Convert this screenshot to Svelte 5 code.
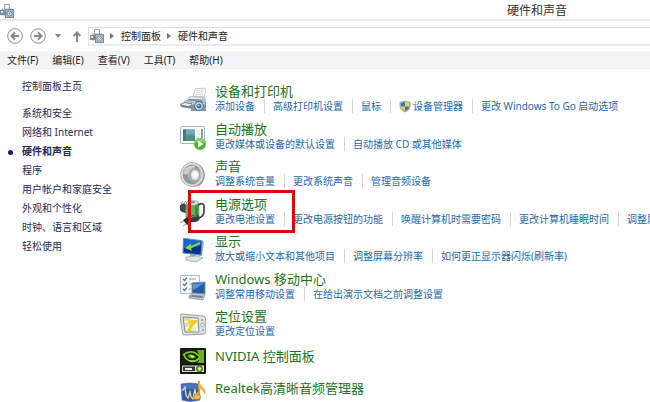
<script lang="ts">
  type Task = { text: string; shield?: boolean };
  type Category = { icon: string; title: string; tasks: Task[]; marked?: boolean };

  const menus = ['文件(F)', '编辑(E)', '查看(V)', '工具(T)', '帮助(H)'];

  const places = [
    '系统和安全',
    '网络和 Internet',
    '硬件和声音',
    '程序',
    '用户帐户和家庭安全',
    '外观和个性化',
    '时钟、语言和区域',
    '轻松使用'
  ];
  let current = $state('硬件和声音');

  const categories: Category[] = [
    {
      icon: 'printer',
      title: '设备和打印机',
      tasks: [
        { text: '添加设备' },
        { text: '高级打印机设置' },
        { text: '鼠标' },
        { text: '设备管理器', shield: true },
        { text: '更改 Windows To Go 启动选项' }
      ]
    },
    {
      icon: 'autoplay',
      title: '自动播放',
      tasks: [{ text: '更改媒体或设备的默认设置' }, { text: '自动播放 CD 或其他媒体' }]
    },
    {
      icon: 'speaker',
      title: '声音',
      tasks: [{ text: '调整系统音量' }, { text: '更改系统声音' }, { text: '管理音频设备' }]
    },
    {
      icon: 'power',
      title: '电源选项',
      marked: true,
      tasks: [
        { text: '更改电池设置' },
        { text: '更改电源按钮的功能' },
        { text: '唤醒计算机时需要密码' },
        { text: '更改计算机睡眠时间' },
        { text: '调整屏幕亮度' }
      ]
    },
    {
      icon: 'display',
      title: '显示',
      tasks: [
        { text: '放大或缩小文本和其他项目' },
        { text: '调整屏幕分辨率' },
        { text: '如何更正显示器闪烁(刷新率)' }
      ]
    },
    {
      icon: 'mobility',
      title: 'Windows 移动中心',
      tasks: [{ text: '调整常用移动设置' }, { text: '在给出演示文档之前调整设置' }]
    },
    { icon: 'location', title: '定位设置', tasks: [{ text: '更改定位设置' }] }
  ];

  const vendors: Category[] = [
    { icon: 'nvidia', title: 'NVIDIA 控制面板', tasks: [] },
    { icon: 'realtek', title: 'Realtek高清晰音频管理器', tasks: [] }
  ];
</script>

{#snippet deviceIcon()}
  <svg class="device" viewBox="0 0 14 14" aria-hidden="true">
    <path d="M4.500 5V.5h5V5" fill="#fff" stroke="#9aa3aa" />
    <path d="M2 5h10l1.500 2v4H2z" fill="#cdd3d7" stroke="#98a2a9" stroke-width=".8" />
    <path d="M0 6h5v5H0z" fill="#7d8b96" />
    <path d="M1 7h2v2H1z" fill="#dfe6ea" />
    <rect x="5.500" y="5.500" width="8" height="8" fill="#a9bac5" stroke="#7b8d99" />
    <circle cx="9.500" cy="9.500" r="2.500" fill="#e2f1f9" stroke="#5c86a0" />
    <circle cx="9.500" cy="9.500" r="1" fill="#4b8cb3" />
  </svg>
{/snippet}

{#snippet shieldIcon()}
  <svg class="shield" viewBox="0 0 12 13" aria-hidden="true">
    <path d="M6 .5 11.500 2v4c0 3-2 5-5.500 6.500C2.500 11 .5 9 .5 6V2z" fill="#a8b0b5" />
    <path d="M6 2v4.500H2V3z" fill="#2979c4" />
    <path d="M6 2l4 1v3.500H6z" fill="#ffd53c" />
    <path d="M2 6.500h4V11C3.500 10 2 8.500 2 6.500z" fill="#f7c52b" />
    <path d="M10 6.500H6V11c2.500-1 4-2.500 4-4.500z" fill="#2b7dc9" />
  </svg>
{/snippet}

{#snippet categoryIcon(name: string)}
  <svg class="icon" viewBox="0 0 26 26" aria-hidden="true">
    {#if name === 'printer'}
      <path d="M13 10 15 2l9-1 2 1-2 9z" fill="#f8fafb" stroke="#b3babe" stroke-width=".7" />
      <path d="M16 4l8-1M15.500 6l8-1M15 8l8-1" stroke="#c5ced4" stroke-width=".6" />
      <path d="M4 14 10 9h13l3 3v8l-5 3-7-1-12-3z" fill="#bcc4c9" />
      <path d="M5 13l6-3 12 1-7 4z" fill="#e6eaed" />
      <path d="M9 12l12 .5-5 1.500-9-.5z" fill="#707c85" />
      <path d="M0 17l5-2 9 2-1 5-12-2z" fill="#77848e" />
      <path d="M1 17.500 5 16l7 1.500-4 1.500z" fill="#edf1f3" />
      <path d="M11 15h4l1-2h6l1 2h3v9H11z" fill="#8195a3" />
      <path d="M12 15.500h13v2H12z" fill="#c3ced5" />
      <circle cx="19" cy="19" r="4.300" fill="#dfebf2" stroke="#4b6579" />
      <circle cx="19" cy="19" r="2.500" fill="#2976ad" />
      <circle cx="18.500" cy="18.500" r="1" fill="#a6dcf7" />
    {:else if name === 'autoplay'}
      <rect x=".5" y="1.500" width="24" height="17" rx="1" fill="#fbfcfc" stroke="#aab3b8" />
      <path d="M3 4.500h12v11.500H3z" fill="#5d9aa6" />
      <path d="M3 4.500h12v5q-6-3-12 2z" fill="#77adc4" />
      <path d="M3 4.500h3V16H3z" fill="#3e79a2" />
      <path d="M6 12q5-3 9 0v4H6z" fill="#4f9468" />
      <path d="M16.500 6h3M16.500 9h3M16.500 12h3" stroke="#ced5d9" />
      <path d="M22 4v9" stroke="#56626a" stroke-width="1.300" />
      <circle cx="20" cy="19" r="6" fill="#4bb431" stroke="#a5d697" stroke-width=".7" />
      <path d="M15 18a5 5 0 0 1 10 0q-5-2-10 0z" fill="#82d45f" />
      <path d="M18 15.500 23.500 19 18 22.500z" fill="#fff" />
    {:else if name === 'speaker'}
      <ellipse cx="15" cy="13" rx="10" ry="11.500" fill="#9a9fa2" />
      <ellipse cx="12" cy="12.500" rx="11.500" ry="12" fill="#dcdfe0" stroke="#a1a6a9" stroke-width=".8" />
      <ellipse cx="12" cy="12.500" rx="9.300" ry="10" fill="#92989c" />
      <path d="M3 12C4 5 9 3 15 3.500L13 13z" fill="#c9cdd0" />
      <path d="M12 13 21 9q1 6-3 10z" fill="#c0c5c8" />
      <ellipse cx="14" cy="13" rx="6" ry="7" fill="#aab0b3" />
      <ellipse cx="15" cy="13" rx="4.500" ry="5.500" fill="#e4e7e8" stroke="#8b9296" stroke-width=".7" />
      <ellipse cx="15" cy="12.500" rx="2.500" ry="3" fill="#f8f9fa" />
    {:else if name === 'power'}
      <path d="M6 12Q-1 11 1 6" fill="none" stroke="#3a4144" stroke-width="2" />
      <path d="M0 5l4-2 4 4-3 4-4-1z" fill="#40484c" />
      <path d="M1 4l2-3M4 3l2-2" stroke="#7f898e" />
      <rect x="6" y="1.500" width="13" height="20" rx="3" fill="#5bb553" stroke="#758f77" stroke-width=".7" />
      <path d="M8 5h3v15H8z" fill="#c1edb3" />
      <path d="M15 5h3v15h-3z" fill="#369238" />
      <ellipse cx="12.500" cy="3" rx="6" ry="2.300" fill="#dce2df" stroke="#869188" stroke-width=".6" />
      <ellipse cx="12.500" cy="2" rx="2.700" ry="1.200" fill="#8a9791" />
      <path d="M18 5q6-3 6 1v5q0 6-6 7" fill="none" stroke="#3c4346" stroke-width="1.700" />
      <path d="M7 19q5-5 11-4l2 4q-5 5-9 2z" fill="#353d40" />
      <path d="M3 20l6-4 4 5-6 4z" fill="#262b2e" />
      <path d="M10 18q4-3 7-2" fill="none" stroke="#99a2a5" />
      <path d="M4 21l-4 2M6 24l-3 2" stroke="#8c9498" />
    {:else if name === 'display'}
      <path d="M3 1l19 2 2 2-2 14-19-3z" fill="#9aafbb" />
      <path d="M3.500 1.500 22 4l-1 14-18-2z" fill="#1548a3" stroke="#6a8799" />
      <path d="M4 2l17 2.500-1 7-16 3z" fill="#1866cc" />
      <path d="M4 11l17-2-1 8-16-2z" fill="#0a318e" />
      <path d="M20 5 11 9V6.500L5 11l7 3-1-2.500L20 7z" fill="#83d94e" />
      <path d="M10 17l6 1v3h-7z" fill="#9cabb3" />
      <path d="M6 20l11-1 6 2-7 4-10-2z" fill="#dce4e8" stroke="#90a3ae" stroke-width=".7" />
    {:else if name === 'mobility'}
      <path d="M.5.500h19v18H.5z" fill="#f9fbfc" stroke="#b3bdc3" />
      <path d="M3 4l1.500 1.500L7 2.500M3 9l1.500 1.500L7 7.500M3 14l1.500 1.500L7 12.500" fill="none" stroke="#4076a6" stroke-width="1.200" />
      <path d="M9 4h7M9 9h3M9 14h2" stroke="#8d9ca5" />
      <path d="M12 8l13-1v12l-13-1z" fill="#3b5570" stroke="#8098ab" />
      <path d="M13 9l11-.8V18l-11-1z" fill="#1c5fae" />
      <path d="M13 9l11-.8-11 7z" fill="#4b9add" />
      <path d="M9 21l4-3 12 1-2 6-14-2z" fill="#bcc8d1" stroke="#7b8996" stroke-width=".7" />
      <path d="M12 20l11 1-1 2-12-1.500z" fill="#707f8d" />
    {:else if name === 'location'}
      <path d="M2 2l21 2q2 0 2.500 2l.5 13q0 3-2 3l-19 1q-2 0-2.500-2L0 4q0-2 2-2z" fill="#dfe2e2" stroke="#9aa0a0" />
      <path d="M3 5l15 1 1 14H5z" fill="#e5edc6" stroke="#858c8c" />
      <path d="M4 6l7 .5L6 17z" fill="#cee2a9" />
      <path d="M5 10l13-2M13 7l5 12M6 16l12-3" stroke="#fff" stroke-width="1.300" />
      <path d="M8 10l7-.5-5 6-1 4" fill="none" stroke="#eeca24" stroke-width="3" />
      <circle cx="22" cy="8" r=".8" fill="#687174" />
      <circle cx="22.500" cy="13" r="1.800" fill="#f5f6f6" stroke="#8a9293" stroke-width=".7" />
      <circle cx="23" cy="18" r=".8" fill="#687174" />
    {:else if name === 'nvidia'}
      <rect width="26" height="26" rx="1" fill="#151715" />
      <path d="M2 2h22v13H2z" fill="#12260d" />
      <path d="M17 2h7v13h-7q5-3 0-13z" fill="#6fb01f" />
      <path d="M3 7q9-7 17 2-4 6-10 4" fill="none" stroke="#7cc524" stroke-width="1.600" />
      <path d="M4 7q2 6 8 6 5 0 7-3" fill="none" stroke="#a5d839" stroke-width="1.300" />
      <path d="M7 8q4-4 9 1-4 4-9-1z" fill="#66a51c" />
      <path d="M10 7q4 0 4 2-2 2-4-2z" fill="#d0f08b" />
      <path d="M2 17.500h22V24H2z" fill="#d6dad3" />
      <path d="M3 18.500h12V23H3z" fill="#343832" />
      <path d="M5 20h7v2H5z" fill="#eef0ec" />
      <circle cx="19.500" cy="20.800" r="3" fill="#77bd20" stroke="#30491b" stroke-width=".8" />
      <path d="M18 20.800h3M19.500 19.300v3" stroke="#efffdc" />
    {:else if name === 'realtek'}
      <path d="M1 4q9-2 18 0l1 16q-10 3-18 0z" fill="#2f57ad" stroke="#6276b7" stroke-width=".7" />
      <path d="M2 5q9-2 16 0v4H2z" fill="#4773c4" />
      <path d="M2 10h1l2-3 1 8 2 3 2-6 1 5 2 2 2-10 1 7 2-3h2" fill="none" stroke="#ead888" stroke-width="1.300" />
      <path d="M19 1v15" stroke="#d99530" stroke-width="2" />
      <path d="M19 1q1 4 4 6 5 4 1 8 0-5-5-6z" fill="#efb455" />
      <ellipse cx="17" cy="17" rx="3.500" ry="2.500" fill="#f5b944" stroke="#c87819" stroke-width=".7" />
    {/if}
  </svg>
{/snippet}

{#snippet categoryRow(category: Category)}
  <li class="category">
    {@render categoryIcon(category.icon)}
    <div class="body">
      <h2><a href="#{category.icon}">{category.title}</a></h2>
      {#if category.tasks.length}
        <ul class="tasks">
          {#each category.tasks as task}
            <li>
              <a href="#{category.icon}">
                {#if task.shield}{@render shieldIcon()}{/if}{task.text}
              </a>
            </li>
          {/each}
        </ul>
      {/if}
    </div>
    {#if category.marked}<span class="marker"></span>{/if}
  </li>
{/snippet}

<div class="window">
  <header class="titlebar">
    {@render deviceIcon()}
    <h1>硬件和声音</h1>
  </header>

  <div class="toolbar">
    <button class="nav" aria-label="后退">
      <svg viewBox="0 0 16 16">
        <circle cx="8" cy="8" r="7.300" />
        <path class="arrow" d="M12 8H4.500M8 4.500 4.500 8 8 11.500" />
      </svg>
    </button>
    <button class="nav" aria-label="前进">
      <svg viewBox="0 0 16 16">
        <circle cx="8" cy="8" r="7.300" />
        <path class="arrow" d="M4 8h7.500M8 4.500 11.500 8 8 11.500" />
      </svg>
    </button>
    <button class="recent" aria-label="最近浏览的位置">
      <svg viewBox="0 0 6 4"><path d="M0 0h6L3 4z" fill="#888" /></svg>
    </button>
    <button class="up" aria-label="上移">
      <svg viewBox="0 0 8 11"><path class="arrow" d="M4 11V1.500M.7 5 4 1.500 7.300 5" /></svg>
    </button>
    <nav class="address" aria-label="地址">
      {@render deviceIcon()}
      <svg class="chevron" viewBox="0 0 4 6"><path d="M0 0l4 3-4 3z" /></svg>
      <a href="#home">控制面板</a>
      <svg class="chevron" viewBox="0 0 4 6"><path d="M0 0l4 3-4 3z" /></svg>
      <a href="#hardware">硬件和声音</a>
    </nav>
  </div>

  <div class="menubar">
    {#each menus as menu}
      <button>{menu}</button>
    {/each}
  </div>

  <div class="content">
    <aside>
      <a href="#home">控制面板主页</a>
      <ul class="places">
        {#each places as place}
          <li class:current={place === current}>
            <a href="#place" onclick={() => (current = place)}>{place}</a>
          </li>
        {/each}
      </ul>
    </aside>

    <main>
      <ul class="categories">
        {#each categories as category}
          {@render categoryRow(category)}
        {/each}
      </ul>
      <ul class="vendors">
        {#each vendors as category}
          {@render categoryRow(category)}
        {/each}
      </ul>
    </main>
  </div>
</div>

<style>
  :global(body) {
    margin: 0;
    background: #fff;
  }

  .window {
    height: 100vh;
    overflow: hidden;
    display: flex;
    flex-direction: column;
    font-family: 'Noto Sans', 'Noto Sans CJK SC', sans-serif;
    font-size: 10px;
    line-height: 16px;
    color: #222;
    white-space: nowrap;
  }

  h1,
  h2,
  ul {
    margin: 0;
    padding: 0;
    font-weight: normal;
    list-style: none;
  }

  a {
    color: inherit;
    text-decoration: none;
  }

  button {
    padding: 0;
    border: 0;
    background: none;
    font: inherit;
    color: inherit;
  }

  svg {
    display: block;
    flex: none;
  }

  .device {
    width: 14px;
    height: 14px;
  }

  .titlebar {
    display: flex;
    align-items: center;
    justify-content: space-between;
    height: 19px;
    padding-top: 2px;
    box-sizing: border-box;
  }

  .titlebar h1 {
    margin-right: 83px;
    font-size: 12px;
    color: #333;
  }

  .toolbar {
    display: flex;
    align-items: center;
    height: 32px;
    padding-left: 7px;
    border-top: 2px solid #e9eaeb;
    box-sizing: border-box;
  }

  .toolbar circle {
    fill: #fff;
    stroke: #8c8c8c;
  }

  .arrow {
    fill: none;
    stroke: #888;
    stroke-width: 2;
  }

  .nav {
    margin-right: 7px;
  }

  .nav svg {
    width: 16px;
    height: 16px;
  }

  .recent {
    margin-left: 2px;
  }

  .recent svg {
    width: 6px;
    height: 4px;
  }

  .up {
    margin: 0 7px 0 12px;
  }

  .up svg {
    width: 8px;
    height: 11px;
  }

  .address {
    flex: 1;
    display: flex;
    align-items: center;
    gap: 6px;
    height: 19px;
    padding-left: 1px;
    border: 1px solid #dedede;
    border-right: 0;
    border-bottom: 2px solid #ececec;
    box-sizing: border-box;
  }

  .chevron {
    width: 4px;
    height: 6px;
    margin-right: 1px;
    fill: #777;
  }

  .menubar {
    display: flex;
    align-items: center;
    gap: 14px;
    height: 18px;
    padding-left: 7px;
    background: #f3f4f6;
    border-bottom: 1px solid #ededee;
    box-sizing: border-box;
  }

  .content {
    flex: 1;
    display: flex;
    min-height: 0;
  }

  aside {
    flex: none;
    width: 158px;
    padding: 9px 0 0 22px;
    line-height: 17px;
    color: #1f2c5c;
  }

  .places {
    display: grid;
    grid-auto-rows: 19px;
    align-items: center;
    margin-top: 9px;
  }

  .places .current {
    position: relative;
    font-weight: bold;
  }

  .current::before {
    content: '';
    position: absolute;
    left: -14px;
    top: 7px;
    width: 5px;
    height: 5px;
    border-radius: 50%;
    background: #151c6b;
  }

  main {
    flex: 1;
    min-width: 0;
    padding-top: 14px;
  }

  .categories {
    display: grid;
    grid-auto-rows: 38px 37px;
  }

  .vendors {
    display: grid;
    grid-auto-rows: 32px;
    margin-top: 2px;
  }

  .category {
    position: relative;
    display: flex;
    gap: 9px;
    min-width: 0;
  }

  .icon {
    width: 26px;
    height: 26px;
    margin-top: 4px;
  }

  .vendors .icon {
    margin-top: 0;
  }

  .body {
    flex: 1;
    min-width: 0;
    overflow: hidden;
  }

  h2 {
    font-size: 13px;
    line-height: 16px;
    color: #1b741e;
  }

  .tasks {
    display: flex;
    line-height: 14px;
    color: #1c69b0;
  }

  .tasks li + li {
    margin-left: 9px;
    padding-left: 8px;
    border-left: 1px solid #d5d5d5;
  }

  .tasks a {
    display: flex;
    align-items: center;
    gap: 2px;
  }

  .shield {
    width: 12px;
    height: 13px;
  }

  .marker {
    position: absolute;
    left: 8px;
    top: -6px;
    width: 107px;
    height: 43px;
    border: 3px solid #e0040b;
    box-sizing: border-box;
    pointer-events: none;
  }
</style>
